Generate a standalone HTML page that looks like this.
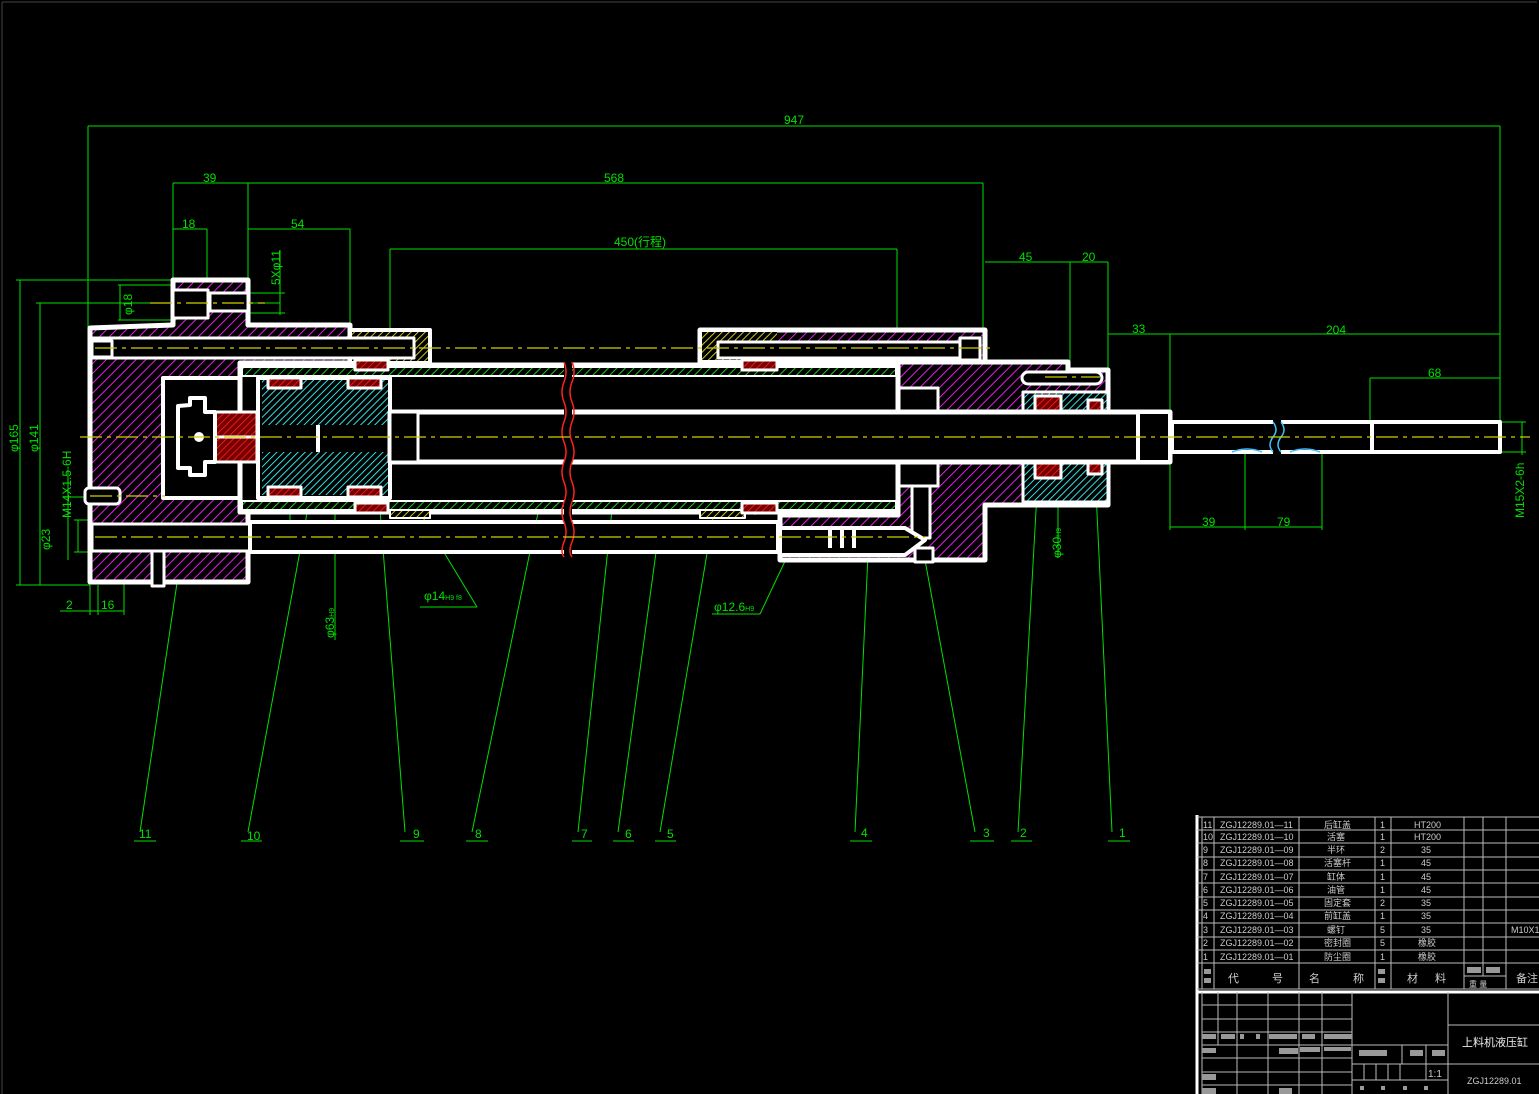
<!DOCTYPE html>
<html><head><meta charset="utf-8"><style>
html,body{margin:0;padding:0;background:#000;}
svg{display:block}
text{font-family:"Liberation Sans","Noto Sans CJK SC",sans-serif;}
</style></head><body>
<svg width="1539" height="1094" viewBox="0 0 1539 1094" xmlns="http://www.w3.org/2000/svg">
<defs>
<pattern id="hm" width="7" height="7" patternUnits="userSpaceOnUse" patternTransform="rotate(45)"><rect width="7" height="7" fill="#000"/><line x1="0" y1="0" x2="0" y2="7" stroke="#ff20ff" stroke-width="1.8"/></pattern>
<pattern id="hg" width="6" height="6" patternUnits="userSpaceOnUse" patternTransform="rotate(45)"><rect width="6" height="6" fill="#000"/><line x1="0" y1="0" x2="0" y2="6" stroke="#20e020" stroke-width="1.8"/></pattern>
<pattern id="hc" width="5" height="5" patternUnits="userSpaceOnUse" patternTransform="rotate(45)"><rect width="5" height="5" fill="#000"/><line x1="0" y1="0" x2="0" y2="5" stroke="#30e0e0" stroke-width="2"/></pattern>
<pattern id="hy" width="5" height="5" patternUnits="userSpaceOnUse" patternTransform="rotate(45)"><rect width="5" height="5" fill="#000"/><line x1="0" y1="0" x2="0" y2="5" stroke="#e0e020" stroke-width="1.8"/></pattern>
<pattern id="hr" width="5" height="5" patternUnits="userSpaceOnUse" patternTransform="rotate(45)"><rect width="5" height="5" fill="#700"/><line x1="0" y1="0" x2="0" y2="5" stroke="#ff2020" stroke-width="1.6"/></pattern>
</defs>
<rect width="1539" height="1094" fill="#000"/>
<line x1="2" y1="2" x2="1537" y2="2" stroke="#444" stroke-width="1"/>
<line x1="2" y1="2" x2="2" y2="1094" stroke="#444" stroke-width="1"/>

<g stroke="#00e000" stroke-width="1" fill="none">
<line x1="88" y1="126" x2="1500" y2="126"/>
<line x1="88" y1="126" x2="88" y2="328"/><line x1="1500" y1="126" x2="1500" y2="425"/>
<line x1="173" y1="183" x2="983" y2="183"/>
<line x1="173" y1="183" x2="173" y2="280"/><line x1="248" y1="183" x2="248" y2="325"/><line x1="983" y1="183" x2="983" y2="335"/>
<line x1="173" y1="229" x2="207" y2="229"/><line x1="207" y1="229" x2="207" y2="290"/>
<line x1="248" y1="229" x2="350" y2="229"/><line x1="350" y1="229" x2="350" y2="325"/>
<line x1="390" y1="249" x2="897" y2="249"/><line x1="390" y1="249" x2="390" y2="365"/><line x1="897" y1="249" x2="897" y2="365"/>
<line x1="985" y1="262" x2="1108" y2="262"/><line x1="1070" y1="262" x2="1070" y2="370"/><line x1="1108" y1="262" x2="1108" y2="410"/>
<line x1="1108" y1="334" x2="1500" y2="334"/><line x1="1170" y1="334" x2="1170" y2="410"/>
<line x1="1370" y1="378" x2="1500" y2="378"/><line x1="1370" y1="378" x2="1370" y2="425"/>
<line x1="1170" y1="527" x2="1322" y2="527"/><line x1="1170" y1="455" x2="1170" y2="530"/><line x1="1245" y1="452" x2="1245" y2="530"/><line x1="1322" y1="452" x2="1322" y2="530"/>
<line x1="1522" y1="422" x2="1522" y2="455"/><line x1="1500" y1="422" x2="1526" y2="422"/><line x1="1500" y1="452" x2="1526" y2="452"/>
<line x1="20" y1="280" x2="20" y2="585"/><line x1="16" y1="280" x2="173" y2="280"/><line x1="16" y1="585" x2="90" y2="585"/>
<line x1="40" y1="303" x2="40" y2="585"/><line x1="36" y1="303" x2="280" y2="303"/>
<line x1="120" y1="285" x2="120" y2="320"/><line x1="118" y1="285" x2="173" y2="285"/><line x1="118" y1="320" x2="173" y2="320"/>
<line x1="280" y1="250" x2="280" y2="315"/><line x1="250" y1="293" x2="285" y2="293"/><line x1="250" y1="313" x2="285" y2="313"/>
<line x1="68" y1="470" x2="68" y2="560"/><line x1="64" y1="497" x2="90" y2="497"/>
<line x1="78" y1="520" x2="78" y2="552"/><line x1="74" y1="520" x2="90" y2="520"/><line x1="74" y1="552" x2="90" y2="552"/>
<line x1="60" y1="611" x2="124" y2="611"/><line x1="90" y1="585" x2="90" y2="615"/><line x1="98" y1="585" x2="98" y2="615"/><line x1="124" y1="550" x2="124" y2="615"/>
<line x1="290" y1="330" x2="290" y2="540"/><line x1="335" y1="330" x2="335" y2="640"/>
<line x1="453" y1="365" x2="453" y2="512"/>
<line x1="755" y1="362" x2="755" y2="515"/><line x1="787" y1="372" x2="787" y2="505"/><line x1="828" y1="365" x2="828" y2="512"/>
<line x1="932" y1="412" x2="932" y2="462"/><line x1="1087" y1="412" x2="1087" y2="462"/><line x1="1058" y1="410" x2="1058" y2="558"/>
<line x1="177" y1="583" x2="140" y2="832"/>
<line x1="310" y1="497" x2="248" y2="832"/>
<line x1="380" y1="510" x2="405" y2="832"/>
<line x1="550" y1="455" x2="472" y2="832"/>
<line x1="612" y1="510" x2="578" y2="832"/>
<line x1="657" y1="545" x2="618" y2="832"/>
<line x1="713" y1="518" x2="660" y2="832"/>
<line x1="868" y1="555" x2="855" y2="832"/>
<line x1="925" y1="560" x2="975" y2="832"/>
<line x1="1038" y1="475" x2="1018" y2="832"/>
<line x1="1095" y1="470" x2="1112" y2="832"/>
<line x1="370" y1="430" x2="477" y2="607"/><line x1="420" y1="607" x2="477" y2="607"/>
<line x1="795" y1="540" x2="760" y2="614"/><line x1="712" y1="614" x2="760" y2="614"/>
<line x1="134" y1="841" x2="156" y2="841"/><line x1="241" y1="841" x2="262" y2="841"/><line x1="400" y1="841" x2="424" y2="841"/><line x1="466" y1="841" x2="488" y2="841"/><line x1="572" y1="841" x2="592" y2="841"/><line x1="613" y1="841" x2="634" y2="841"/><line x1="655" y1="841" x2="676" y2="841"/><line x1="850" y1="841" x2="872" y2="841"/><line x1="970" y1="841" x2="994" y2="841"/><line x1="1011" y1="841" x2="1032" y2="841"/><line x1="1108" y1="841" x2="1130" y2="841"/>
</g>
<g fill="#00e000" font-size="12">
<text x="784" y="124">947</text>
<text x="604" y="182">568</text><text x="203" y="182">39</text>
<text x="182" y="228">18</text><text x="291" y="228">54</text>
<text x="614" y="246">450(行程)</text>
<text x="1019" y="261">45</text><text x="1082" y="261">20</text>
<text x="1132" y="333">33</text><text x="1326" y="334">204</text><text x="1428" y="377">68</text>
<text x="1202" y="526">39</text><text x="1277" y="526">79</text>
<text x="66" y="609">2</text><text x="101" y="609">16</text>
<text x="424" y="600">φ14<tspan font-size="7">H9 f8</tspan></text>
<text x="714" y="611">φ12.6<tspan font-size="7">H9</tspan></text>
<text x="139" y="838">11</text><text x="247" y="840">10</text><text x="413" y="838">9</text><text x="475" y="838">8</text><text x="581" y="838">7</text><text x="625" y="838">6</text><text x="667" y="838">5</text><text x="861" y="837">4</text><text x="983" y="837">3</text><text x="1020" y="837">2</text><text x="1119" y="837">1</text>
<text transform="translate(18,452) rotate(-90)">φ165</text>
<text transform="translate(38,452) rotate(-90)">φ141</text>
<text transform="translate(71,518) rotate(-90)">M14X1.5-6H</text>
<text transform="translate(50,550) rotate(-90)">φ23</text>
<text transform="translate(132,315) rotate(-90)">φ18</text>
<text transform="translate(280,285) rotate(-90)">5Xφ11</text>
<text transform="translate(288,455) rotate(-90)">φ185</text>
<text transform="translate(334,638) rotate(-90)">φ63<tspan font-size="7">H9</tspan></text>
<text transform="translate(450,455) rotate(-90)">φ76<tspan font-size="7">H7</tspan></text>
<text transform="translate(753,450) rotate(-90)">φ80</text>
<text transform="translate(786,450) rotate(-90)">φ69</text>
<text transform="translate(827,455) rotate(-90)">φ76<tspan font-size="7">H7</tspan></text>
<text transform="translate(930,450) rotate(-90)">φ25</text>
<text transform="translate(1078,450) rotate(-90)">φ26</text>
<text transform="translate(1061,558) rotate(-90)">φ30<tspan font-size="7">H9</tspan></text>
<text transform="translate(1524,518) rotate(-90)">M15X2-6h</text>
</g>

<g stroke="#fff" stroke-width="5" stroke-linejoin="round">
<path d="M700,330 H985 V362 H700 Z" fill="url(#hm)"/>
<rect x="702" y="332" width="75" height="28" fill="url(#hy)" stroke="none"/>
<rect x="718" y="342" width="245" height="16" fill="#000" stroke-width="3"/>
<rect x="960" y="338" width="20" height="22" fill="#000" stroke-width="3"/>
<path d="M898,362 H1068 V370 H1108 V505 H985 V560 H780 V515 H898 Z" fill="url(#hm)"/>
<rect x="1023" y="392" width="85" height="20" fill="url(#hc)" stroke-width="3"/>
<rect x="1023" y="462" width="85" height="40" fill="url(#hc)" stroke-width="3"/>
<rect x="1035" y="396" width="26" height="16" fill="url(#hr)" stroke-width="3"/>
<rect x="1035" y="462" width="26" height="16" fill="url(#hr)" stroke-width="3"/>
<rect x="1088" y="400" width="14" height="12" fill="url(#hr)" stroke-width="3"/>
<rect x="1088" y="462" width="14" height="12" fill="url(#hr)" stroke-width="3"/>
<rect x="1022" y="372" width="80" height="12" rx="6" fill="#000" stroke-width="3"/>
<rect x="898" y="388" width="40" height="24" fill="#000" stroke-width="3"/>
<rect x="898" y="462" width="40" height="24" fill="#000" stroke-width="3"/>
<rect x="912" y="486" width="18" height="52" fill="#000" stroke-width="3"/>
<path d="M90,328 L173,325 V280 H248 V325 H350 V363 H240 V512 H248 V582 H90 Z" fill="url(#hm)"/>
<rect x="173" y="290" width="35" height="28" fill="#000" stroke-width="3"/>
<rect x="210" y="293" width="38" height="18" fill="#000" stroke-width="3"/>
<rect x="163" y="378" width="80" height="120" fill="#000" stroke-width="4"/>
<rect x="350" y="330" width="80" height="33" fill="url(#hy)" stroke-width="4"/>
<rect x="92" y="338" width="322" height="20" fill="#000" stroke-width="3"/>
<rect x="92" y="341" width="20" height="16" fill="#000" stroke-width="3"/>
<rect x="85" y="488" width="35" height="16" rx="4" fill="#000" stroke-width="3"/>
<rect x="152" y="540" width="12" height="46" fill="#000" stroke-width="3"/>
<rect x="240" y="365" width="658" height="147" fill="#000"/>
<rect x="242" y="367" width="654" height="9" fill="url(#hg)" stroke-width="2"/>
<rect x="242" y="501" width="654" height="9" fill="url(#hg)" stroke-width="2"/>
<rect x="390" y="510" width="40" height="8" fill="url(#hy)" stroke-width="2"/>
<rect x="700" y="510" width="45" height="8" fill="url(#hy)" stroke-width="2"/>
<rect x="355" y="360" width="33" height="10" fill="url(#hr)" stroke-width="3"/>
<rect x="355" y="503" width="33" height="10" fill="url(#hr)" stroke-width="3"/>
<rect x="742" y="360" width="35" height="10" fill="url(#hr)" stroke-width="3"/>
<rect x="742" y="503" width="35" height="10" fill="url(#hr)" stroke-width="3"/>
<rect x="258" y="378" width="132" height="120" fill="#000" stroke-width="4"/>
<rect x="262" y="380" width="126" height="45" fill="url(#hc)" stroke="none"/>
<rect x="262" y="452" width="126" height="43" fill="url(#hc)" stroke="none"/>
<rect x="268" y="378" width="33" height="10" fill="url(#hr)" stroke-width="3"/>
<rect x="348" y="378" width="33" height="10" fill="url(#hr)" stroke-width="3"/>
<rect x="268" y="487" width="33" height="10" fill="url(#hr)" stroke-width="3"/>
<rect x="348" y="487" width="33" height="10" fill="url(#hr)" stroke-width="3"/>
<rect x="215" y="412" width="42" height="25" fill="url(#hr)" stroke-width="3"/>
<rect x="215" y="437" width="42" height="25" fill="url(#hr)" stroke-width="3"/>
<path d="M190,405 V398 H205 V412 H215 V462 H205 V475 H190 V468 H178 V406 Z" fill="#000" stroke-width="4"/>
<rect x="390" y="412" width="780" height="50" fill="#000"/>
<rect x="390" y="412" width="28" height="50" fill="#000" stroke-width="3"/>
<rect x="1138" y="412" width="32" height="50" fill="#000" stroke-width="4"/>
<rect x="1172" y="422" width="328" height="30" fill="#000" stroke-width="4"/>
<rect x="92" y="524" width="158" height="27" fill="#000" stroke-width="3"/>
<rect x="250" y="522" width="528" height="30" fill="#000" stroke-width="4"/>
<path d="M780,528 H905 L925,540 L905,555 H780 Z" fill="#000" stroke-width="4"/>
<rect x="915" y="548" width="18" height="14" fill="#000" stroke-width="3"/>
</g>
<circle cx="199" cy="437" r="5" fill="#fff"/>
<g stroke="#fff" stroke-width="4">
<line x1="830" y1="528" x2="830" y2="548"/><line x1="842" y1="528" x2="842" y2="548"/><line x1="854" y1="528" x2="854" y2="548"/>
<line x1="318" y1="425" x2="318" y2="452"/>
<line x1="1372" y1="422" x2="1372" y2="452"/>
</g>
<g stroke="#000" stroke-width="8">
<line x1="568" y1="360" x2="568" y2="560"/>
<line x1="1277" y1="418" x2="1277" y2="456"/>
</g>
<g stroke="#ff2020" stroke-width="1.5" fill="none">
<path d="M564,362 q4,10 0,20 q-4,10 0,20 q4,10 0,20 q-4,10 0,20 q4,10 0,20 q-4,10 0,20 q4,10 0,20 q-4,10 0,20 q4,10 0,20 q-4,10 0,15"/>
<path d="M572,362 q4,10 0,20 q-4,10 0,20 q4,10 0,20 q-4,10 0,20 q4,10 0,20 q-4,10 0,20 q4,10 0,20 q-4,10 0,20 q4,10 0,20 q-4,10 0,15"/>
</g>
<path d="M1273,422 q6,8 0,15 q-6,8 0,15" stroke="#40c0ff" fill="none" stroke-width="1.5"/>
<path d="M1281,422 q6,8 0,15 q-6,8 0,15" stroke="#40c0ff" fill="none" stroke-width="1.5"/>
<path d="M1232,452 q15,-6 30,0 M1290,452 q15,-6 30,0" stroke="#40c0ff" fill="none" stroke-width="1.5"/>
<g stroke="#d0d000" stroke-width="1.2" stroke-dasharray="22,5,4,5" fill="none">
<line x1="80" y1="437" x2="1530" y2="437"/>
<line x1="95" y1="348" x2="990" y2="348"/>
<line x1="95" y1="537" x2="925" y2="537"/>
<line x1="150" y1="303" x2="265" y2="303"/>
<line x1="90" y1="496" x2="165" y2="496"/>
<line x1="1045" y1="377" x2="1100" y2="377"/>
</g>

<g stroke="#bbb" stroke-width="1" fill="none">
<line x1="1197" y1="815" x2="1197" y2="1094" stroke="#fff" stroke-width="3"/>
<line x1="1197" y1="817" x2="1539" y2="817"/>
<line x1="1197" y1="830" x2="1539" y2="830"/><line x1="1197" y1="843" x2="1539" y2="843"/><line x1="1197" y1="857" x2="1539" y2="857"/><line x1="1197" y1="870" x2="1539" y2="870"/><line x1="1197" y1="883" x2="1539" y2="883"/><line x1="1197" y1="897" x2="1539" y2="897"/><line x1="1197" y1="910" x2="1539" y2="910"/><line x1="1197" y1="923" x2="1539" y2="923"/><line x1="1197" y1="937" x2="1539" y2="937"/><line x1="1197" y1="950" x2="1539" y2="950"/><line x1="1197" y1="963" x2="1539" y2="963"/>
<line x1="1197" y1="989" x2="1539" y2="989"/>
<line x1="1202" y1="817" x2="1202" y2="989"/><line x1="1214" y1="817" x2="1214" y2="989"/><line x1="1299" y1="817" x2="1299" y2="989"/><line x1="1375" y1="817" x2="1375" y2="989"/><line x1="1391" y1="817" x2="1391" y2="989"/><line x1="1464" y1="817" x2="1464" y2="989"/><line x1="1483" y1="817" x2="1483" y2="976"/><line x1="1506" y1="817" x2="1506" y2="989"/>
<line x1="1464" y1="976" x2="1506" y2="976"/>
</g>
<line x1="1197" y1="992" x2="1539" y2="992" stroke="#fff" stroke-width="3"/>
<g stroke="#bbb" stroke-width="1" fill="none">
<line x1="1202" y1="992" x2="1202" y2="1094"/><line x1="1218" y1="992" x2="1218" y2="1045"/><line x1="1237" y1="992" x2="1237" y2="1094"/><line x1="1268" y1="992" x2="1268" y2="1094"/><line x1="1299" y1="992" x2="1299" y2="1094"/><line x1="1322" y1="992" x2="1322" y2="1094"/><line x1="1352" y1="992" x2="1352" y2="1094"/><line x1="1448" y1="992" x2="1448" y2="1094"/>
<line x1="1202" y1="1005" x2="1352" y2="1005"/><line x1="1202" y1="1019" x2="1352" y2="1019"/><line x1="1202" y1="1032" x2="1352" y2="1032"/><line x1="1202" y1="1045" x2="1448" y2="1045"/><line x1="1202" y1="1058" x2="1352" y2="1058"/><line x1="1202" y1="1072" x2="1352" y2="1072"/><line x1="1202" y1="1085" x2="1352" y2="1085"/>
<line x1="1352" y1="1064" x2="1539" y2="1064"/><line x1="1352" y1="1080" x2="1448" y2="1080"/>
<line x1="1448" y1="1025" x2="1539" y2="1025"/>
<line x1="1402" y1="1045" x2="1402" y2="1064"/><line x1="1426" y1="1045" x2="1426" y2="1080"/>
<line x1="1364" y1="1064" x2="1364" y2="1080"/><line x1="1376" y1="1064" x2="1376" y2="1080"/><line x1="1388" y1="1064" x2="1388" y2="1080"/><line x1="1400" y1="1064" x2="1400" y2="1080"/>
</g>
<g fill="#999">
<rect x="1204" y="969" width="7" height="5"/><rect x="1204" y="978" width="7" height="5"/>
<rect x="1378" y="969" width="7" height="5"/><rect x="1378" y="978" width="7" height="5"/>
<rect x="1467" y="967" width="14" height="6"/><rect x="1486" y="967" width="14" height="6"/>
<rect x="1202" y="1034" width="14" height="5"/><rect x="1221" y="1034" width="14" height="5"/><rect x="1240" y="1034" width="4" height="5"/><rect x="1256" y="1034" width="4" height="5"/><rect x="1269" y="1034" width="28" height="5"/><rect x="1302" y="1034" width="13" height="5"/><rect x="1324" y="1034" width="28" height="5"/>
<rect x="1202" y="1048" width="14" height="5"/><rect x="1279" y="1048" width="19" height="6"/><rect x="1300" y="1047" width="20" height="5"/><rect x="1324" y="1047" width="27" height="4"/>
<rect x="1359" y="1050" width="28" height="6"/><rect x="1410" y="1050" width="13" height="6"/><rect x="1432" y="1050" width="13" height="6"/>
<rect x="1202" y="1074" width="14" height="6"/><rect x="1202" y="1088" width="14" height="6"/><rect x="1279" y="1088" width="13" height="6"/>
<rect x="1360" y="1086" width="4" height="4"/><rect x="1381" y="1086" width="4" height="4"/><rect x="1403" y="1086" width="4" height="4"/><rect x="1424" y="1086" width="4" height="4"/>
</g>
<g fill="#ccc" font-size="9" font-family="Liberation Mono, Noto Sans CJK SC, monospace">
<text x="1203" y="828">11</text><text x="1220" y="828">ZGJ12289.01—11</text><text x="1324" y="828">后缸盖</text><text x="1380" y="828">1</text><text x="1414" y="828">HT200</text>
<text x="1203" y="840">10</text><text x="1220" y="840">ZGJ12289.01—10</text><text x="1327" y="840">活塞</text><text x="1380" y="840">1</text><text x="1414" y="840">HT200</text>
<text x="1203" y="853">9</text><text x="1220" y="853">ZGJ12289.01—09</text><text x="1327" y="853">半环</text><text x="1380" y="853">2</text><text x="1421" y="853">35</text>
<text x="1203" y="866">8</text><text x="1220" y="866">ZGJ12289.01—08</text><text x="1324" y="866">活塞杆</text><text x="1380" y="866">1</text><text x="1421" y="866">45</text>
<text x="1203" y="880">7</text><text x="1220" y="880">ZGJ12289.01—07</text><text x="1327" y="880">缸体</text><text x="1380" y="880">1</text><text x="1421" y="880">45</text>
<text x="1203" y="893">6</text><text x="1220" y="893">ZGJ12289.01—06</text><text x="1327" y="893">油管</text><text x="1380" y="893">1</text><text x="1421" y="893">45</text>
<text x="1203" y="906">5</text><text x="1220" y="906">ZGJ12289.01—05</text><text x="1324" y="906">固定套</text><text x="1380" y="906">2</text><text x="1421" y="906">35</text>
<text x="1203" y="919">4</text><text x="1220" y="919">ZGJ12289.01—04</text><text x="1324" y="919">前缸盖</text><text x="1380" y="919">1</text><text x="1421" y="919">35</text>
<text x="1203" y="933">3</text><text x="1220" y="933">ZGJ12289.01—03</text><text x="1327" y="933">螺钉</text><text x="1380" y="933">5</text><text x="1421" y="933">35</text><text x="1511" y="933">M10X1</text>
<text x="1203" y="946">2</text><text x="1220" y="946">ZGJ12289.01—02</text><text x="1324" y="946">密封圈</text><text x="1380" y="946">5</text><text x="1418" y="946">橡胶</text>
<text x="1203" y="960">1</text><text x="1220" y="960">ZGJ12289.01—01</text><text x="1324" y="960">防尘圈</text><text x="1380" y="960">1</text><text x="1418" y="960">橡胶</text>
<g font-size="11"><text x="1228" y="982">代</text><text x="1272" y="982">号</text><text x="1309" y="982">名</text><text x="1353" y="982">称</text><text x="1407" y="982">材</text><text x="1435" y="982">料</text><text x="1516" y="982">备注</text></g>
<text x="1469" y="987" font-size="8">重 量</text>
<text x="1462" y="1046" font-size="11" fill="#eee">上料机液压缸</text>
<text x="1428" y="1077" font-size="10">1:1</text>
<text x="1467" y="1084" font-size="9">ZGJ12289.01</text>
</g>
</svg>
</body></html>
